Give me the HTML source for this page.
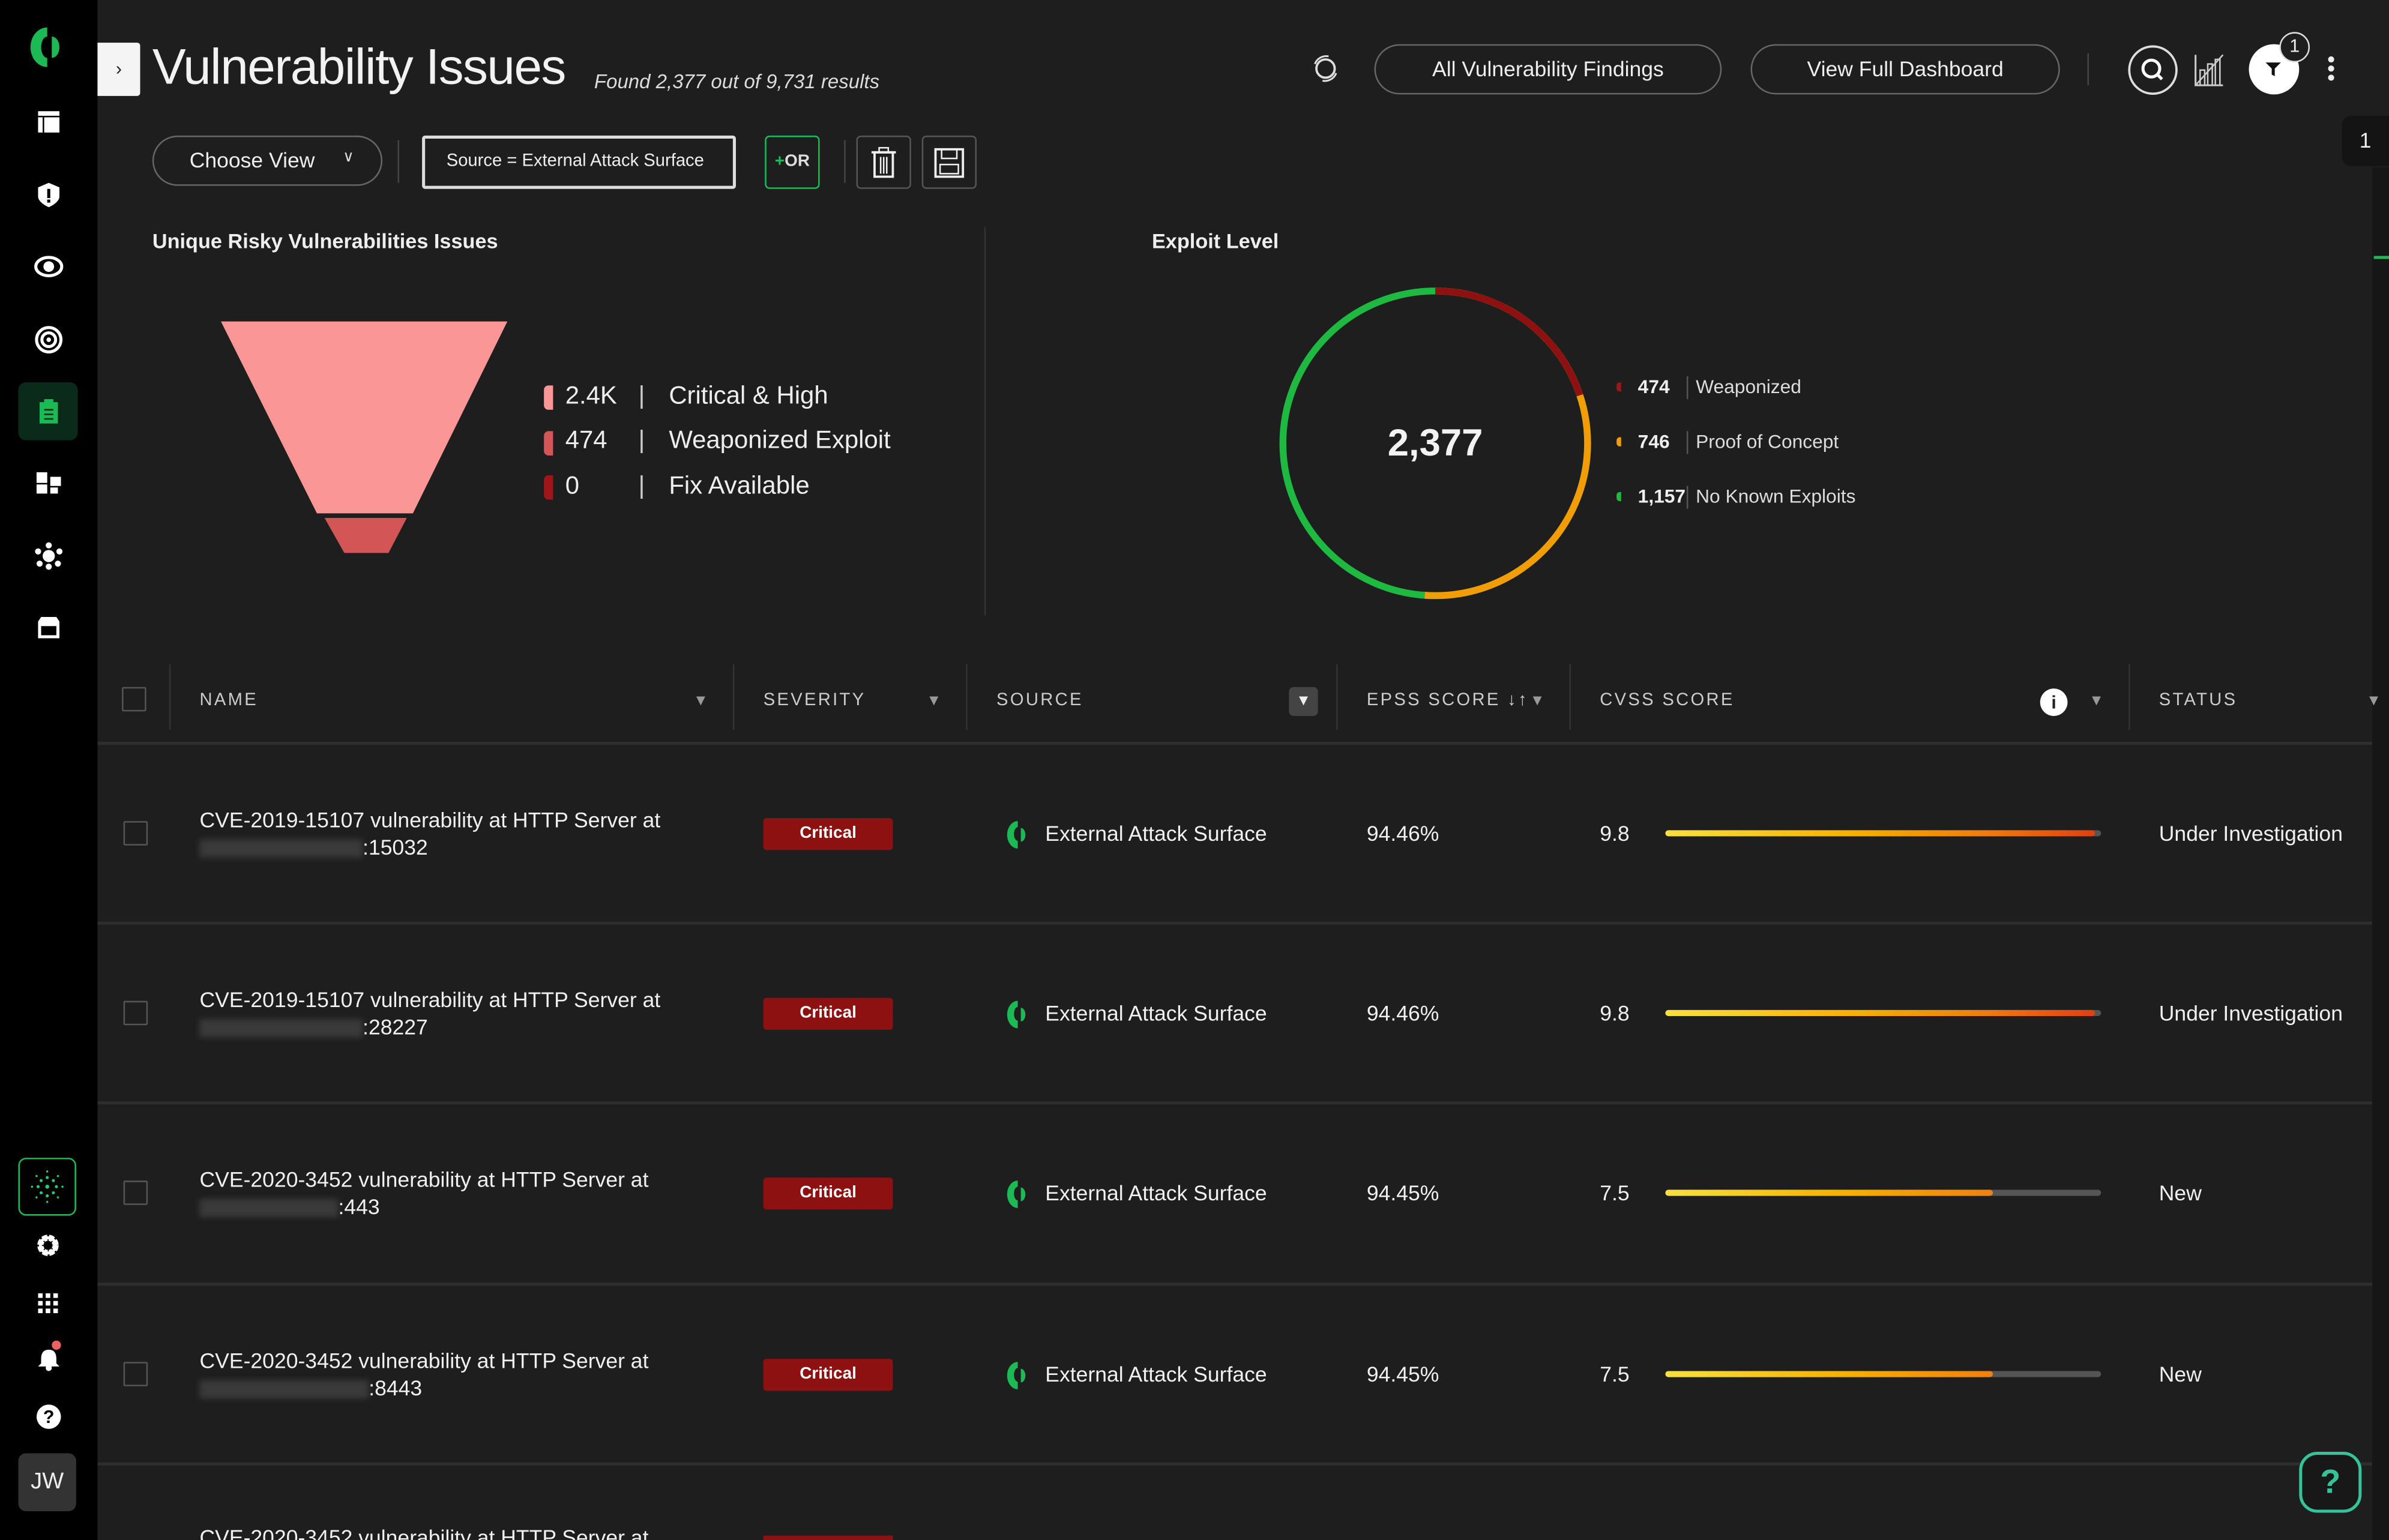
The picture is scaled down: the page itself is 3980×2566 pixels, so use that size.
<!DOCTYPE html>
<html><head><meta charset="utf-8"><style>
*{box-sizing:border-box;margin:0;padding:0}
html,body{width:3980px;height:2566px;overflow:hidden;background:#1e1e1e}
#s{position:absolute;left:0;top:0;width:1568px;height:1011px;transform:scale(2.5383);transform-origin:0 0;background:#1e1e1e;font-family:"Liberation Sans",sans-serif;color:#eee;overflow:hidden}
.a{position:absolute}
.side{left:0;top:0;width:64px;height:1011px;background:#000}
.pill{border:1.5px solid #666;border-radius:18px;color:#eee;font-size:14px;text-align:center}
.hdr{font-size:11.5px;letter-spacing:1.3px;color:#ccc;top:454px}
.vl{background:#333;width:1px}
.row{font-size:14px;color:#f0f0f0}
.cb{width:16px;height:16px;border:1.5px solid #555;border-radius:1px}
.crit{width:85px;height:21px;background:#8e1111;border-radius:2px;font-size:11px;font-weight:bold;text-align:center;line-height:21px;color:#fff}
.bar{height:4px;width:286px;background:#555;border-radius:2px}
.sep{left:64px;width:1493px;height:2px;background:#2e2e2e}
.blur{background:#3a3a3a;filter:blur(2px);height:12px}
.fi{color:#999;font-size:10px}
</style></head><body><div id="s">
<div class="a side"></div>
<!-- logo -->
<svg class="a" style="left:18px;top:16px" width="28" height="30" viewBox="0 0 28 30"><path d="M13 2 A11 13 0 0 0 13 28 L13 22 A4 7 0 0 1 13 8Z" fill="#1db954"/><path d="M16 8 A5 7 0 0 1 16 22Z" fill="#1db954"/></svg>
<!-- sidebar icons -->
<svg class="a" style="left:24px;top:72px" width="16" height="16"><rect x="1" y="1" width="14" height="3" fill="#fff"/><rect x="1" y="5" width="3" height="10" fill="#fff"/><rect x="5" y="5" width="10" height="10" fill="#fff"/></svg>
<svg class="a" style="left:24px;top:119px" width="16" height="18"><path d="M8 1 L15 4 V10 C15 14 8 17 8 17 C8 17 1 14 1 10 V4Z" fill="#fff"/><rect x="7" y="5" width="2" height="6" fill="#000"/><rect x="7" y="12" width="2" height="2" fill="#000"/></svg>
<svg class="a" style="left:22px;top:166px" width="20" height="18"><ellipse cx="10" cy="9" rx="8.5" ry="6" fill="none" stroke="#fff" stroke-width="2"/><circle cx="10" cy="9" r="3.5" fill="#fff"/></svg>
<svg class="a" style="left:22px;top:213px" width="20" height="20"><circle cx="10" cy="10" r="8" fill="none" stroke="#fff" stroke-width="2"/><circle cx="10" cy="10" r="4.5" fill="none" stroke="#fff" stroke-width="2"/><circle cx="10" cy="10" r="1.5" fill="#fff"/></svg>
<div class="a" style="left:12px;top:251px;width:39px;height:38px;background:#0b2b1a;border-radius:5px"></div>
<svg class="a" style="left:24px;top:261px" width="16" height="18"><rect x="2" y="3" width="12" height="14" fill="#1db954"/><rect x="5" y="1" width="6" height="3" fill="#1db954"/><g stroke="#0b2b1a" stroke-width="1"><line x1="5" y1="8" x2="11" y2="8"/><line x1="5" y1="11" x2="11" y2="11"/><line x1="5" y1="14" x2="11" y2="14"/></g></svg>
<svg class="a" style="left:23px;top:309px" width="18" height="16"><rect x="1" y="1" width="7" height="7" fill="#fff"/><rect x="10" y="4" width="7" height="6" fill="#fff"/><rect x="1" y="9" width="7" height="6" fill="#fff"/><rect x="10" y="11" width="5" height="4" fill="#fff"/></svg>
<svg class="a" style="left:22px;top:355px" width="20" height="20"><g fill="#fff"><circle cx="10" cy="10" r="4"/><circle cx="10" cy="3" r="2"/><circle cx="10" cy="17" r="2"/><circle cx="3" cy="7" r="2"/><circle cx="17" cy="7" r="2"/><circle cx="4" cy="15" r="2"/><circle cx="16" cy="15" r="2"/></g></svg>
<svg class="a" style="left:24px;top:404px" width="16" height="16"><path d="M1 4 L3 1 H13 L15 4 V15 H1Z" fill="#fff"/><rect x="3" y="7" width="10" height="6" fill="#000"/></svg>
<div class="a" style="left:12px;top:760px;width:38px;height:38px;border:1.5px solid #1db954;border-radius:5px"></div>
<svg class="a" style="left:19px;top:767px" width="24" height="24"><g fill="#2ecc71"><circle cx="12" cy="12" r="1.3"/><circle cx="12" cy="6" r="1"/><circle cx="12" cy="18" r="1"/><circle cx="6" cy="12" r="1"/><circle cx="18" cy="12" r="1"/><circle cx="8" cy="8" r="1"/><circle cx="16" cy="8" r="1"/><circle cx="8" cy="16" r="1"/><circle cx="16" cy="16" r="1"/><circle cx="12" cy="2" r=".7"/><circle cx="12" cy="22" r=".7"/><circle cx="2" cy="12" r=".7"/><circle cx="22" cy="12" r=".7"/><circle cx="5" cy="5" r=".7"/><circle cx="19" cy="5" r=".7"/><circle cx="5" cy="19" r=".7"/><circle cx="19" cy="19" r=".7"/></g></svg>
<svg class="a" style="left:23px;top:809px" width="17" height="17"><circle cx="8.5" cy="8.5" r="5" fill="none" stroke="#fff" stroke-width="4" stroke-dasharray="3 1"/><circle cx="8.5" cy="8.5" r="5" fill="none" stroke="#fff" stroke-width="2"/><circle cx="8.5" cy="8.5" r="2" fill="#000"/></svg>
<svg class="a" style="left:25px;top:849px" width="14" height="13"><g fill="#fff"><rect x="0" y="0" width="3" height="3"/><rect x="5" y="0" width="3" height="3"/><rect x="10" y="0" width="3" height="3"/><rect x="0" y="5" width="3" height="3"/><rect x="5" y="5" width="3" height="3"/><rect x="10" y="5" width="3" height="3"/><rect x="0" y="10" width="3" height="3"/><rect x="5" y="10" width="3" height="3"/><rect x="10" y="10" width="3" height="3"/></g></svg>
<svg class="a" style="left:23px;top:878px" width="20" height="24"><circle cx="14" cy="5" r="3" fill="#f06060"/><path d="M9 8 C5 8 4 11 4 14 V17 L2 19 H16 L14 17 V14 C14 11 13 8 9 8Z" fill="#fff"/><circle cx="9" cy="20" r="2" fill="#fff"/></svg>
<div class="a" style="left:24px;top:922px;width:16px;height:16px;border-radius:50%;background:#fff;color:#000;font-size:12px;font-weight:bold;text-align:center;line-height:16px">?</div>
<div class="a" style="left:12px;top:954px;width:38px;height:38px;background:#333;border-radius:5px;font-size:15px;text-align:center;line-height:38px;color:#eee">JW</div>

<!-- header -->
<div class="a" style="left:64px;top:28px;width:28px;height:35px;background:#f4f4f4;border-radius:0 2px 2px 0;color:#222;font-size:12px;text-align:center;line-height:35px">›</div>
<div class="a" style="left:100px;top:25px;font-size:33px;letter-spacing:-0.6px;color:#f2f2f2">Vulnerability Issues</div>
<div class="a" style="left:390px;top:46px;font-size:13px;font-style:italic;color:#ddd">Found 2,377 out of 9,731 results</div>
<svg class="a" style="left:858px;top:33px" width="24" height="24"><circle cx="12" cy="12" r="6" fill="none" stroke="#ddd" stroke-width="1.5"/><path d="M5 9 A8 8 0 0 1 14 4" fill="none" stroke="#ddd" stroke-width="1.2"/><path d="M19 15 A8 8 0 0 1 10 20" fill="none" stroke="#ddd" stroke-width="1.2"/></svg>
<div class="a pill" style="left:902px;top:29px;width:228px;height:33px;line-height:31px">All Vulnerability Findings</div>
<div class="a pill" style="left:1149px;top:29px;width:203px;height:33px;line-height:31px">View Full Dashboard</div>
<div class="a vl" style="left:1370px;top:35px;height:21px;background:#444"></div>
<svg class="a" style="left:1396px;top:29px" width="34" height="34"><circle cx="17" cy="17" r="15.5" fill="none" stroke="#ddd" stroke-width="1.5"/><circle cx="16" cy="16" r="5.5" fill="none" stroke="#fff" stroke-width="2"/><line x1="20" y1="20" x2="23" y2="23" stroke="#fff" stroke-width="2"/></svg>
<svg class="a" style="left:1439px;top:34px" width="22" height="24"><path d="M2 2 V22 H20" fill="none" stroke="#ccc" stroke-width="1.2"/><rect x="5" y="12" width="3" height="10" fill="none" stroke="#ccc"/><rect x="10" y="8" width="3" height="14" fill="none" stroke="#ccc"/><rect x="15" y="5" width="3" height="17" fill="none" stroke="#ccc"/><line x1="2" y1="22" x2="20" y2="2" stroke="#ccc"/></svg>
<div class="a" style="left:1476px;top:29px;width:33px;height:33px;border-radius:50%;background:#fff"></div>
<svg class="a" style="left:1486px;top:39px" width="12" height="12"><path d="M1 2 H11 L7 6 V11 L5 10 V6Z" fill="#111"/></svg>
<div class="a" style="left:1496px;top:21px;width:20px;height:20px;border-radius:50%;background:#1e1e1e;border:1.5px solid #ddd;font-size:12px;text-align:center;line-height:17px">1</div>
<div class="a" style="left:1528px;top:37px;width:4px;height:4px;border-radius:50%;background:#eee;box-shadow:0 6px #eee,0 12px #eee"></div>
<div class="a" style="left:1537px;top:76px;width:31px;height:33px;background:#141414;border-radius:6px 0 0 6px;font-size:14px;text-align:center;line-height:33px">1</div>
<div class="a" style="left:1557px;top:110px;width:11px;height:901px;background:#161616"></div>
<div class="a" style="left:1558px;top:168px;width:10px;height:2px;background:#1db954"></div>

<!-- toolbar -->
<div class="a pill" style="left:100px;top:89px;width:151px;height:33px;line-height:31px;padding-right:20px">Choose View</div>
<div class="a" style="left:225px;top:98px;font-size:10px;color:#ddd">∨</div>
<div class="a vl" style="left:261px;top:92px;height:28px;background:#444"></div>
<div class="a" style="left:277px;top:89px;width:206px;height:35px;border:2px solid #ddd;border-radius:2px;font-size:11.5px;line-height:31px;padding-left:14px;color:#eee;white-space:nowrap">Source = External Attack Surface</div>
<div class="a" style="left:502px;top:89px;width:36px;height:35px;border:1.5px solid #1db954;border-radius:3px;font-size:11px;font-weight:bold;text-align:center;line-height:33px;color:#ddd"><span style="color:#1db954">+</span>OR</div>
<div class="a vl" style="left:554px;top:92px;height:28px;background:#444"></div>
<div class="a" style="left:562px;top:89px;width:36px;height:35px;border:1.5px solid #555;border-radius:3px"></div>
<svg class="a" style="left:571px;top:96px" width="18" height="21"><rect x="3" y="4" width="12" height="16" fill="none" stroke="#eee" stroke-width="1.5"/><line x1="1" y1="4" x2="17" y2="4" stroke="#eee" stroke-width="1.5"/><rect x="6" y="1" width="6" height="3" fill="none" stroke="#eee"/><g stroke="#eee"><line x1="7" y1="7" x2="7" y2="18"/><line x1="9" y1="7" x2="9" y2="18"/><line x1="11" y1="7" x2="11" y2="18"/></g></svg>
<div class="a" style="left:605px;top:89px;width:36px;height:35px;border:1.5px solid #555;border-radius:3px"></div>
<svg class="a" style="left:613px;top:97px" width="20" height="20"><rect x="1" y="1" width="18" height="18" fill="none" stroke="#eee" stroke-width="1.5"/><rect x="5" y="1" width="10" height="6" fill="none" stroke="#eee"/><rect x="4" y="11" width="12" height="6" fill="none" stroke="#eee"/></svg>

<!-- left chart -->
<div class="a" style="left:100px;top:151px;font-size:13.5px;font-weight:bold;color:#eee">Unique Risky Vulnerabilities Issues</div>
<svg class="a" style="left:140px;top:205px" width="200" height="165"><polygon points="5,6 193,6 131,132 68,132" fill="#fa9696"/><polygon points="73,135 127,135 115,158 86,158" fill="#d45555"/></svg>
<div class="a" style="left:357px;top:253px;width:6px;height:16px;background:#fa9696;border-radius:3px 0 0 3px"></div>
<div class="a" style="left:357px;top:283px;width:6px;height:16px;background:#d45555;border-radius:3px 0 0 3px"></div>
<div class="a" style="left:357px;top:312px;width:6px;height:16px;background:#a01515;border-radius:3px 0 0 3px"></div>
<div class="a" style="left:371px;top:251px;font-size:16.5px;color:#eee">
<div style="position:absolute;top:0">2.4K</div><div style="position:absolute;top:29px">474</div><div style="position:absolute;top:59px">0</div>
<div style="position:absolute;left:48px;top:0;color:#ccc">|</div><div style="position:absolute;left:48px;top:29px;color:#ccc">|</div><div style="position:absolute;left:48px;top:59px;color:#ccc">|</div>
<div style="position:absolute;left:68px;top:0;white-space:nowrap">Critical &amp; High</div><div style="position:absolute;left:68px;top:29px;white-space:nowrap">Weaponized Exploit</div><div style="position:absolute;left:68px;top:59px;white-space:nowrap">Fix Available</div>
</div>
<div class="a vl" style="left:646px;top:149px;height:255px;background:#333"></div>

<!-- right chart -->
<div class="a" style="left:756px;top:151px;font-size:13.5px;font-weight:bold;color:#eee">Exploit Level</div>
<svg class="a" style="left:836px;top:185px" width="212" height="212">
<g transform="rotate(-90 106 106)" fill="none" stroke-width="4.5">
<circle cx="106" cy="106" r="100" stroke="#1db940" stroke-dasharray="628.3 628.3"/>
<circle cx="106" cy="106" r="100" stroke="#f29c06" stroke-dasharray="321 628.3"/>
<circle cx="106" cy="106" r="100" stroke="#8e1010" stroke-dasharray="125 628.3"/>
</g>
<text x="106" y="114" text-anchor="middle" font-family="Liberation Sans" font-size="25" font-weight="bold" fill="#f2f2f2">2,377</text>
</svg>
<div class="a" style="left:1061px;top:251px;width:3px;height:6px;background:#a01515;border-radius:2px 0 0 2px"></div>
<div class="a" style="left:1061px;top:287px;width:3px;height:6px;background:#f29c06;border-radius:2px 0 0 2px"></div>
<div class="a" style="left:1061px;top:323px;width:3px;height:6px;background:#1db940;border-radius:2px 0 0 2px"></div>
<div class="a" style="left:1075px;top:247px;font-size:12.5px;color:#eee">
<div style="position:absolute;top:0;font-weight:bold">474</div><div style="position:absolute;top:36px;font-weight:bold">746</div><div style="position:absolute;top:72px;font-weight:bold">1,157</div>
<div style="position:absolute;left:32px;top:0;width:1px;height:15px;background:#555"></div><div style="position:absolute;left:32px;top:36px;width:1px;height:15px;background:#555"></div><div style="position:absolute;left:32px;top:72px;width:1px;height:15px;background:#555"></div>
<div style="position:absolute;left:38px;top:0;white-space:nowrap;color:#ddd">Weaponized</div><div style="position:absolute;left:38px;top:36px;white-space:nowrap;color:#ddd">Proof of Concept</div><div style="position:absolute;left:38px;top:72px;white-space:nowrap;color:#ddd">No Known Exploits</div>
</div>

<!-- table header -->
<div class="a cb" style="left:80px;top:451px"></div>
<div class="a vl" style="left:111px;top:436px;height:43px"></div>
<div class="a hdr" style="left:131px">NAME</div><div class="a fi" style="left:455px;top:455px">▼</div>
<div class="a vl" style="left:481px;top:436px;height:43px"></div>
<div class="a hdr" style="left:501px">SEVERITY</div><div class="a fi" style="left:608px;top:455px">▼</div>
<div class="a vl" style="left:634px;top:436px;height:43px"></div>
<div class="a hdr" style="left:654px">SOURCE</div>
<div class="a" style="left:846px;top:451px;width:19px;height:19px;background:#444;border-radius:3px;color:#eee;font-size:10px;text-align:center;line-height:19px">▼</div>
<div class="a vl" style="left:877px;top:436px;height:43px"></div>
<div class="a hdr" style="left:897px">EPSS SCORE ↓↑</div><div class="a fi" style="left:1004px;top:455px">▼</div>
<div class="a vl" style="left:1030px;top:436px;height:43px"></div>
<div class="a hdr" style="left:1050px">CVSS SCORE</div>
<div class="a" style="left:1339px;top:452px;width:18px;height:18px;border-radius:50%;background:#fff;color:#222;font-size:12px;font-weight:bold;text-align:center;line-height:18px">i</div>
<div class="a fi" style="left:1371px;top:455px">▼</div>
<div class="a vl" style="left:1397px;top:436px;height:43px"></div>
<div class="a hdr" style="left:1417px">STATUS</div><div class="a fi" style="left:1553px;top:455px">▼</div>
<div class="a sep" style="top:487px"></div>

<!-- rows -->
<div class="a row" style="left:0;top:487px;width:1557px;height:118px">
<div class="a cb" style="left:81px;top:52px"></div>
<div class="a" style="left:131px;top:43px">CVE-2019-15107 vulnerability at HTTP Server at</div>
<div class="a blur" style="left:131px;top:64px;width:107px"></div><div class="a" style="left:238px;top:61px">:15032</div>
<div class="a crit" style="left:501px;top:50px">Critical</div>
<svg class="a" style="left:660px;top:51px" width="18" height="20"><path d="M8 1 A7 9 0 0 0 8 19 L8 14 A2.5 4.5 0 0 1 8 5Z" fill="#1db954"/><path d="M10 5.5 A3 4.5 0 0 1 10 14.5Z" fill="#1db954"/></svg>
<div class="a" style="left:686px;top:52px">External Attack Surface</div>
<div class="a" style="left:897px;top:52px">94.46%</div><div class="a" style="left:1050px;top:52px">9.8</div>
<div class="a bar" style="left:1093px;top:58px"><div style="width:282px;height:4px;border-radius:2px;background:linear-gradient(90deg,#f7e040,#f5b000 45%,#f07a10 75%,#e04010)"></div></div>
<div class="a" style="left:1417px;top:52px">Under Investigation</div>
</div>
<div class="a sep" style="top:605px"></div>
<div class="a row" style="left:0;top:605px;width:1557px;height:118px">
<div class="a cb" style="left:81px;top:52px"></div>
<div class="a" style="left:131px;top:43px">CVE-2019-15107 vulnerability at HTTP Server at</div>
<div class="a blur" style="left:131px;top:64px;width:107px"></div><div class="a" style="left:238px;top:61px">:28227</div>
<div class="a crit" style="left:501px;top:50px">Critical</div>
<svg class="a" style="left:660px;top:51px" width="18" height="20"><path d="M8 1 A7 9 0 0 0 8 19 L8 14 A2.5 4.5 0 0 1 8 5Z" fill="#1db954"/><path d="M10 5.5 A3 4.5 0 0 1 10 14.5Z" fill="#1db954"/></svg>
<div class="a" style="left:686px;top:52px">External Attack Surface</div>
<div class="a" style="left:897px;top:52px">94.46%</div><div class="a" style="left:1050px;top:52px">9.8</div>
<div class="a bar" style="left:1093px;top:58px"><div style="width:282px;height:4px;border-radius:2px;background:linear-gradient(90deg,#f7e040,#f5b000 45%,#f07a10 75%,#e04010)"></div></div>
<div class="a" style="left:1417px;top:52px">Under Investigation</div>
</div>
<div class="a sep" style="top:723px"></div>
<div class="a row" style="left:0;top:723px;width:1557px;height:118px">
<div class="a cb" style="left:81px;top:52px"></div>
<div class="a" style="left:131px;top:43px">CVE-2020-3452 vulnerability at HTTP Server at</div>
<div class="a blur" style="left:131px;top:64px;width:91px"></div><div class="a" style="left:222px;top:61px">:443</div>
<div class="a crit" style="left:501px;top:50px">Critical</div>
<svg class="a" style="left:660px;top:51px" width="18" height="20"><path d="M8 1 A7 9 0 0 0 8 19 L8 14 A2.5 4.5 0 0 1 8 5Z" fill="#1db954"/><path d="M10 5.5 A3 4.5 0 0 1 10 14.5Z" fill="#1db954"/></svg>
<div class="a" style="left:686px;top:52px">External Attack Surface</div>
<div class="a" style="left:897px;top:52px">94.45%</div><div class="a" style="left:1050px;top:52px">7.5</div>
<div class="a bar" style="left:1093px;top:58px"><div style="width:215px;height:4px;border-radius:2px;background:linear-gradient(90deg,#f7e040,#f5b000 55%,#f08010)"></div></div>
<div class="a" style="left:1417px;top:52px">New</div>
</div>
<div class="a sep" style="top:842px"></div>
<div class="a row" style="left:0;top:842px;width:1557px;height:118px">
<div class="a cb" style="left:81px;top:52px"></div>
<div class="a" style="left:131px;top:43px">CVE-2020-3452 vulnerability at HTTP Server at</div>
<div class="a blur" style="left:131px;top:64px;width:111px"></div><div class="a" style="left:242px;top:61px">:8443</div>
<div class="a crit" style="left:501px;top:50px">Critical</div>
<svg class="a" style="left:660px;top:51px" width="18" height="20"><path d="M8 1 A7 9 0 0 0 8 19 L8 14 A2.5 4.5 0 0 1 8 5Z" fill="#1db954"/><path d="M10 5.5 A3 4.5 0 0 1 10 14.5Z" fill="#1db954"/></svg>
<div class="a" style="left:686px;top:52px">External Attack Surface</div>
<div class="a" style="left:897px;top:52px">94.45%</div><div class="a" style="left:1050px;top:52px">7.5</div>
<div class="a bar" style="left:1093px;top:58px"><div style="width:215px;height:4px;border-radius:2px;background:linear-gradient(90deg,#f7e040,#f5b000 55%,#f08010)"></div></div>
<div class="a" style="left:1417px;top:52px">New</div>
</div>
<div class="a sep" style="top:960px"></div>
<div class="a row" style="left:131px;top:1001px">CVE-2020-3452 vulnerability at HTTP Server at</div>
<div class="a" style="left:501px;top:1008px;width:85px;height:4px;background:#8e1111"></div>

<div class="a" style="left:1509px;top:953px;width:41px;height:40px;border:2.5px solid #35c49a;border-radius:12px;background:#181818;color:#35c49a;font-size:22px;font-weight:bold;text-align:center;line-height:35px">?</div>
</div></body></html>
